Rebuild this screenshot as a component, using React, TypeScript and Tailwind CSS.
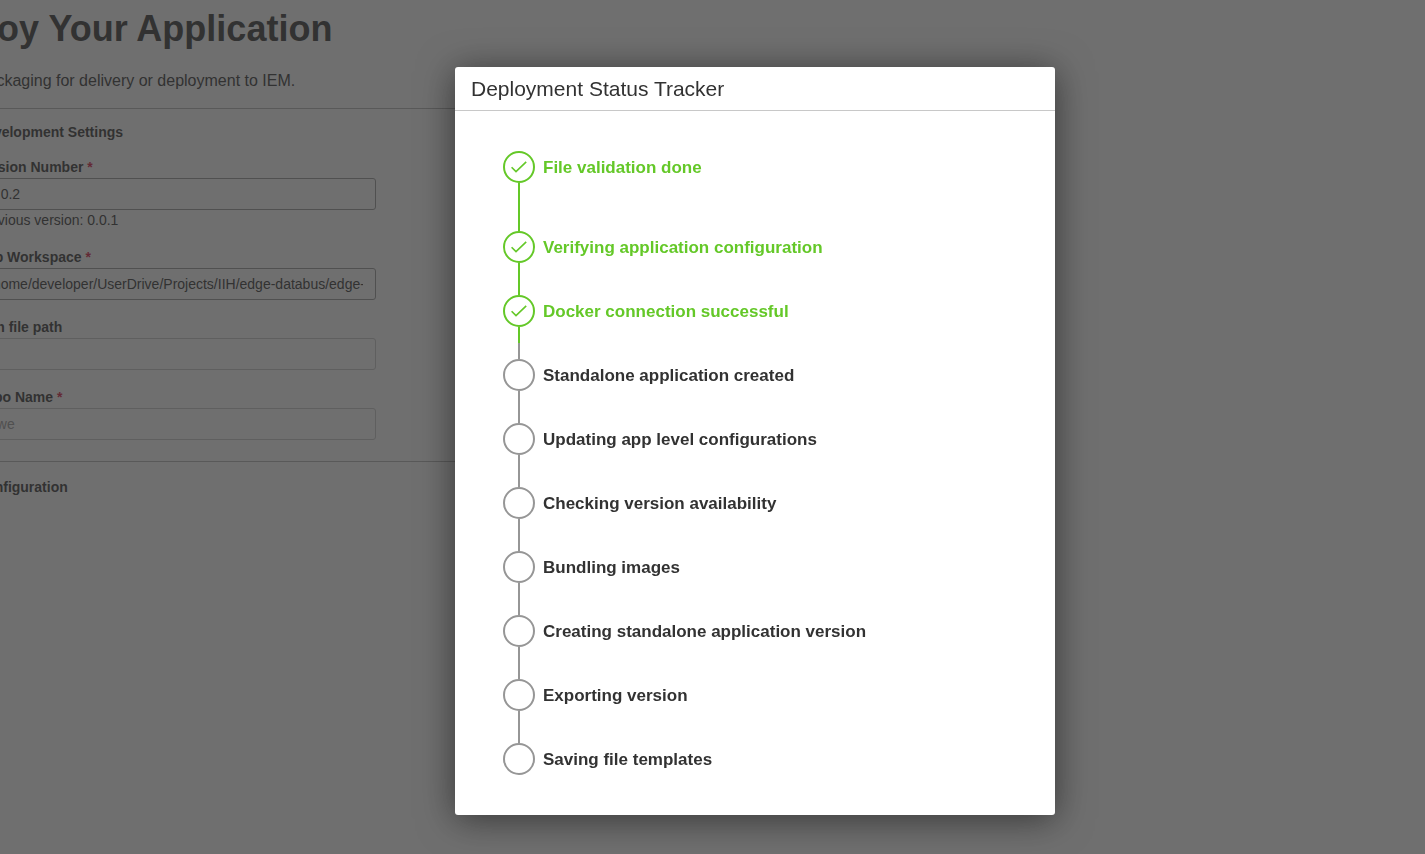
type StepState = "done" | "pending";

interface Step {
  label: string;
  state: StepState;
}

const steps: Step[] = [
  { label: "File validation done", state: "done" },
  { label: "Verifying application configuration", state: "done" },
  { label: "Docker connection successful", state: "done" },
  { label: "Standalone application created", state: "pending" },
  { label: "Updating app level configurations", state: "pending" },
  { label: "Checking version availability", state: "pending" },
  { label: "Bundling images", state: "pending" },
  { label: "Creating standalone application version", state: "pending" },
  { label: "Exporting version", state: "pending" },
  { label: "Saving file templates", state: "pending" },
];

interface FieldProps {
  id: string;
  label: string;
  value: string;
  required?: boolean;
  disabled?: boolean;
  hint?: string;
}

function Field({ id, label, value, required, disabled, hint }: FieldProps) {
  return (
    <div className="flex flex-col">
      <label htmlFor={id} className="text-sm leading-[22px] font-bold">
        {label} {required && <span className="text-[#d7143c]">*</span>}
      </label>
      <input
        id={id}
        type="text"
        defaultValue={value}
        disabled={disabled}
        className="h-8 w-[400px] rounded-[3px] border border-[#969696] bg-white px-3 text-sm disabled:border-[#c8c8c8] disabled:text-[#969696]"
      />
      {hint && <p className="text-sm leading-5">{hint}</p>}
    </div>
  );
}

function DeployPage() {
  return (
    <main className="-ml-[85px] max-w-3xl">
      <h1 className="pl-1 text-4xl leading-[58px] font-bold">Deploy Your Application</h1>
      <p className="mt-[11px] pl-1 text-base leading-6">Choose packaging for delivery or deployment to IEM.</p>
      <section className="mt-[15px] border-t border-[#b4b4b4] pt-[13px] pl-[61px]">
        <h2 className="text-sm leading-5 font-bold">Development Settings</h2>
        <form className="mt-[14px] flex flex-col gap-4">
          <Field id="version" label="Version Number" value="0.0.2" required hint="Previous version: 0.0.1" />
          <Field
            id="workspace"
            label="App Workspace"
            value="/home/developer/UserDrive/Projects/IIH/edge-databus/edge-databus"
            required
          />
          <Field id="icon-path" label="Icon file path" value="" disabled />
          <Field id="repo" label="Repo Name" value="qwe" required disabled />
        </form>
      </section>
      <section className="mt-[21px] border-t border-[#b4b4b4] pt-[15px] pl-[61px]">
        <h2 className="text-sm leading-5 font-bold">Configuration</h2>
      </section>
    </main>
  );
}

function StepMarker({ state }: { state: StepState }) {
  if (state === "done") {
    return (
      <span className="flex size-8 shrink-0 items-center justify-center rounded-full border-2 border-[#64c828]">
        <svg viewBox="0 0 16 16" className="size-4" fill="none" stroke="#64c828" strokeWidth="1.6" aria-hidden="true">
          <path d="M0.6 8.2 L5 12.6 L15.2 2.8" />
        </svg>
      </span>
    );
  }
  return <span className="size-8 shrink-0 rounded-full border-2 border-[#969696]" />;
}

function Connector({ from, to, tall }: { from: StepState; to: StepState; tall: boolean }) {
  return (
    <span className={`ml-[15px] flex w-0.5 flex-col ${tall ? "h-12" : "h-8"}`}>
      <span className={`flex-1 ${from === "done" ? "bg-[#64c828]" : "bg-[#969696]"}`} />
      <span className={`flex-1 ${to === "done" ? "bg-[#64c828]" : "bg-[#969696]"}`} />
    </span>
  );
}

function StatusDialog() {
  return (
    <div className="fixed inset-0 flex items-center justify-center bg-[#323232]/70 pt-7 pl-[85px]">
      <div
        role="dialog"
        aria-modal="true"
        aria-labelledby="tracker-title"
        className="w-[600px] rounded-[3px] bg-white shadow-[0_4px_36px_rgba(0,0,0,0.52)]"
      >
        <header className="border-b border-[#c8c8c8] px-4">
          <h2 id="tracker-title" className="text-[21px] leading-[43px]">
            Deployment Status Tracker
          </h2>
        </header>
        <ol className="px-12 py-10">
          {steps.map((step, i) => {
            const next = steps[i + 1];
            return (
              <li key={step.label}>
                <div
                  className={`flex items-center gap-2 text-[17px] leading-6 font-bold ${
                    step.state === "done" ? "text-[#64c828]" : "text-[#323232]"
                  }`}
                >
                  <StepMarker state={step.state} />
                  <span className="pt-0.5">{step.label}</span>
                </div>
                {next && <Connector from={step.state} to={next.state} tall={i === 0} />}
              </li>
            );
          })}
        </ol>
      </div>
    </div>
  );
}

export default function App() {
  return (
    <div className="min-h-screen overflow-hidden bg-white font-['Liberation_Sans',Arial,sans-serif] text-[#323232]">
      <DeployPage />
      <StatusDialog />
    </div>
  );
}
